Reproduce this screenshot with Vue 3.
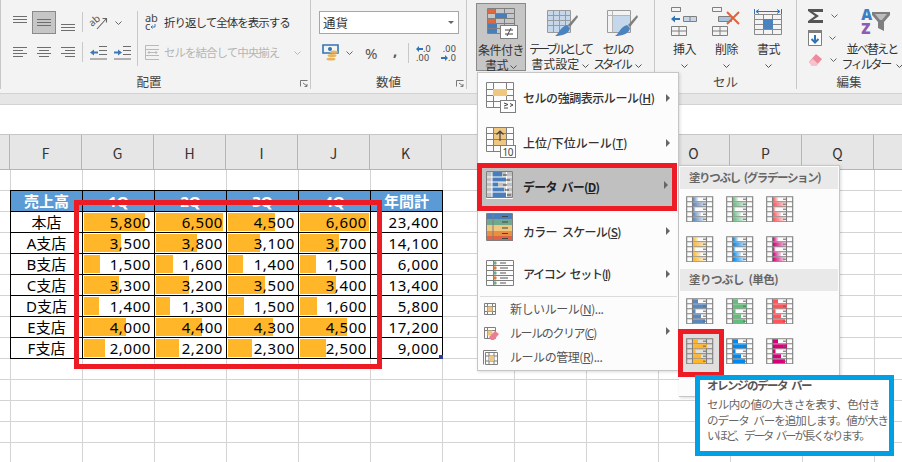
<script setup>
const cols = ['G', 'H', 'I', 'J', 'K']
const heads = ['1Q', '2Q', '3Q', '4Q']
const rows = [
  { name: '本店', v: [['5,800', 61], ['6,500', 67], ['4,500', 47], ['6,600', 69]], t: '23,400' },
  { name: 'A支店', v: [['3,500', 37], ['3,800', 41], ['3,100', 32], ['3,700', 39]], t: '14,100' },
  { name: 'B支店', v: [['1,500', 16], ['1,600', 17], ['1,400', 15], ['1,500', 16]], t: '6,000' },
  { name: 'C支店', v: [['3,300', 35], ['3,200', 33], ['3,500', 37], ['3,400', 36]], t: '13,400' },
  { name: 'D支店', v: [['1,400', 15], ['1,300', 14], ['1,500', 16], ['1,600', 17]], t: '5,800' },
  { name: 'E支店', v: [['4,000', 42], ['4,400', 46], ['4,300', 45], ['4,500', 47]], t: '17,200' },
  { name: 'F支店', v: [['2,000', 21], ['2,200', 23], ['2,300', 24], ['2,500', 26]], t: '9,000' }
]
const barLens = [5, 14, 2.5, 8, 12]
const gradColors = [['g1', '#5b87bd'], ['g2', '#63be7b'], ['g3', '#ff555a'], ['g4', '#ffb628'], ['g5', '#008aef'], ['g6', '#d6007b']]
const solidColors = ['#5b87bd', '#63be7b', '#ff555a', '#ffb628', '#008aef', '#d6007b']
const gridPath = 'M.7.7h26v25h-26zM.7 5.7h26M.7 10.7h26M.7 15.7h26M.7 20.7h26M6.5.7v25M20.5.7v25'
const dashPath = 'M17 3.2h3M17 8.2h3M17 13.2h3M17 18.2h3M17 23.2h3'
</script>

<template>
  <div class="app">
    <svg width="0" height="0" class="defs">
      <defs>
        <linearGradient v-for="g in gradColors" :key="g[0]" :id="g[0]">
          <stop offset="0" :stop-color="g[1]" />
          <stop offset="1" :stop-color="g[1]" stop-opacity=".15" />
        </linearGradient>
      </defs>
    </svg>

    <header class="ribbon">
      <section class="group g-align">
        <div class="tools">
          <div class="grid3">
            <span class="tb"><svg width="14" height="16" stroke="#6e6e6e" fill="none"><path d="M0 1.5h14M0 4.5h14M0 7.5h14" /></svg></span>
            <span class="tb on"><svg width="14" height="16" stroke="#6e6e6e" fill="none"><path d="M0 4.5h14M0 7.5h14M0 10.5h14" /></svg></span>
            <span class="tb"><svg width="14" height="16" stroke="#6e6e6e" fill="none"><path d="M0 9.5h14M0 12.5h14M0 15.5h14" /></svg></span>
            <span class="tb"><svg width="14" height="16" stroke="#6e6e6e" fill="none"><path d="M0 2.5h14M0 5.5h10M0 8.5h14M0 11.5h10" /></svg></span>
            <span class="tb"><svg width="14" height="16" stroke="#6e6e6e" fill="none"><path d="M0 2.5h14M2 5.5h10M0 8.5h14M2 11.5h10" /></svg></span>
            <span class="tb"><svg width="14" height="16" stroke="#6e6e6e" fill="none"><path d="M0 2.5h14M4 5.5h10M0 8.5h14M4 11.5h10" /></svg></span>
          </div>
          <div class="vsep-col"><i></i><i></i></div>
          <div class="orient">
            <div class="o-row">
              <span class="tb wide"><svg class="ori" width="18" height="15" fill="none" stroke="#666"><text x="0" y="0" transform="translate(2 12) rotate(-40)" class="orient-t">ab</text><path d="M7 14l9-10M12.500 3.500H16.500V7.500" stroke-width="1.100" /></svg><svg class="chev" width="7" height="4" viewBox="0 0 7 4" fill="none" stroke="#666"><path d="M.5.5l3 3 3-3" /></svg></span>
            </div>
            <div class="o-row">
              <span class="tb"><svg width="17" height="14" fill="none"><path d="M9 .5h8M9 4.5h8M9 8.5h8M0 13h17" stroke="#6e6e6e" /><path d="M0 6.5l4-3v2h4v2H4v2z" fill="#3f78b5" /></svg></span>
              <span class="tb"><svg width="17" height="14" fill="none"><path d="M9 .5h8M9 4.5h8M9 8.5h8M0 13h17" stroke="#6e6e6e" /><path d="M8 6.5l-4-3v2H0v2h4v2z" fill="#3f78b5" /></svg></span>
            </div>
          </div>
          <div class="sep tall"></div>
          <div class="wrapcol">
            <div class="wrapline"><svg width="14" height="16" fill="none"><path d="M10 9v3H6M7.500 10.500L6 12l1.500 1.500" stroke="#3f78b5" /></svg><span class="abc">ab<br />c</span><span class="rt">折り返して全体を表示する</span></div>
            <div class="wrapline dim"><svg class="merge" width="15" height="15" fill="none" stroke="#b9b9b9"><path d="M.5.500h14v14H.5zM.5 4.500h14M.5 10.500h14M3 7.500h9M4.500 6L3 7.500 4.500 9M10.500 6L12 7.500 10.500 9" /></svg><span class="rt">セルを結合して中央揃え</span><svg class="chev far" width="7" height="4" viewBox="0 0 7 4" fill="none" stroke="#b9b9b9"><path d="M.5.5l3 3 3-3" /></svg></div>
          </div>
        </div>
        <footer class="glabel"><span>配置</span><svg class="launch" width="8" height="7" fill="none" stroke="#777"><path d="M.5 6.500V.5h7M3 3l4 3M7 4v2.500H4.500" /></svg></footer>
      </section>

      <section class="group g-num">
        <div class="numtools">
          <div class="combo"><span>通貨</span><i></i></div>
          <div class="numrow">
            <svg width="17" height="17" fill="none"><path d="M1 1h15v8H1z" stroke="#2f75b5" stroke-width="1.600" /><circle cx="8" cy="5" r="2" fill="#2f75b5" /><ellipse cx="12" cy="8" rx="4" ry="1.600" fill="#e8b35f" /><ellipse cx="10" cy="11.500" rx="4.500" ry="1.600" fill="#e8b35f" /><ellipse cx="9" cy="15" rx="4.500" ry="1.600" fill="#e8b35f" /></svg>
            <svg class="chev nc" width="7" height="4" viewBox="0 0 7 4" fill="none" stroke="#666"><path d="M.5.5l3 3 3-3" /></svg>
            <span class="pct">%</span>
            <span class="cma">,</span>
            <i class="minisep"></i>
            <span class="dec"><b class="d-top"><svg width="7" height="6"><path d="M0 3l3-3v2h4v2H3v2z" fill="#2f75b5" /></svg>.0</b><b>.00</b></span>
            <span class="dec r"><b>.00</b><b class="d-top"><svg width="7" height="6"><path d="M7 3L4 0v2H0v2h4v2z" fill="#2f75b5" /></svg>.0</b></span>
          </div>
        </div>
        <footer class="glabel"><span>数値</span><svg class="launch" width="8" height="7" fill="none" stroke="#777"><path d="M.5 6.500V.5h7M3 3l4 3M7 4v2.500H4.500" /></svg></footer>
      </section>

      <section class="group g-style">
        <div class="bigs">
          <div class="big b-cond active">
            <svg class="ic" width="31" height="31" fill="none">
              <path d="M.5.5h27v25H.5zM.5 5.500h27M.5 10.500h27M.5 15.500h27M.5 20.500h27M8.500.5v25M17.500.5v25M26 .5" stroke="#7f7f7f" />
              <path d="M1 1h7v4H1zM1 11h7v4H1z" fill="#dd6b3f" /><path d="M8 6h12v4H8zM1 16h9v4H1zM1 21h9v4H1z" fill="#4a7ebb" />
              <rect x="13.500" y="17.500" width="17" height="13" fill="#fff" stroke="#7f7f7f" /><path d="M18 22h8M18 26h8M24 20l-4 8" stroke="#444" />
            </svg>
            <span>条件付き</span><span>書式 <svg class="chev" width="7" height="4" viewBox="0 0 7 4" fill="none" stroke="#555"><path d="M.5.5l3 3 3-3" /></svg></span>
          </div>
          <div class="big b-table">
            <svg class="ic" width="31" height="29" fill="none">
              <path d="M1 1h22v21H1z" fill="#c5d7ea" /><path d="M.5.500h23v22H.5zM.5 5.500h23M.5 10.500h23M.5 15.500h23M6.500.5v22M12.500.5v22M18.500.5v22" stroke="#9a9a9a" />
              <path d="M30 5l-9 10 2 2 8-10z" fill="#7f7f7f" /><path d="M20 15l3 3c-1 6-8 8-15 8 4-2 5-9 12-11z" fill="#4a83bd" />
            </svg>
            <span class="k3">テーブルとして</span><span class="k0">書式設定 <svg class="chev" width="7" height="4" viewBox="0 0 7 4" fill="none" stroke="#555"><path d="M.5.5l3 3 3-3" /></svg></span>
          </div>
          <div class="big b-cell">
            <svg class="ic" width="31" height="29" fill="none">
              <path d="M.5.500h23v22H.5z" stroke="#9a9a9a" /><path d="M.5 5.500h23M5.500.5v22" stroke="#b5b5b5" /><path d="M6 6h17v16H6z" fill="#c5d7ea" />
              <path d="M30 5l-9 10 2 2 8-10z" fill="#7f7f7f" /><path d="M20 15l3 3c-1 6-8 8-15 8 4-2 5-9 12-11z" fill="#4a83bd" />
            </svg>
            <span class="k2">セルの</span><span class="k28">スタイル <svg class="chev" width="7" height="4" viewBox="0 0 7 4" fill="none" stroke="#555"><path d="M.5.5l3 3 3-3" /></svg></span>
          </div>
        </div>
        <footer class="glabel"></footer>
      </section>

      <section class="group g-cell">
        <div class="bigs">
          <div class="big b-c">
            <svg class="ic" width="29" height="29" fill="none"><path d="M1.500.500h9v4h-9zM10.500.5v4M1.500 19.500h15v9h-15zM1.500 24h15M9 19.500v9" stroke="#7f7f7f" /><path d="M13.500 9.500h13v5h-13z" fill="#c5d7ea" stroke="#7f7f7f" /><path d="M20 9.500v5" stroke="#7f7f7f" /><path d="M1 12l4-3.500v2.500h5v2H5v2.500z" fill="#2f75b5" /></svg>
            <span>挿入</span><svg class="chev low" width="7" height="4" viewBox="0 0 7 4" fill="none" stroke="#555"><path d="M.5.5l3 3 3-3" /></svg>
          </div>
          <div class="big b-c">
            <svg class="ic" width="31" height="29" fill="none"><path d="M1.500.500h9v4h-9zM10.500.5v4M1.500 19.500h15v9h-15zM1.500 24h15M9 19.500v9" stroke="#7f7f7f" /><path d="M7.500 9.500h13v5h-13z" fill="#a9c4de" stroke="#7f7f7f" /><path d="M16 5l12 12M28 5L16 17" stroke="#e0633a" stroke-width="2" /></svg>
            <span>削除</span><svg class="chev low" width="7" height="4" viewBox="0 0 7 4" fill="none" stroke="#555"><path d="M.5.5l3 3 3-3" /></svg>
          </div>
          <div class="big b-c">
            <svg class="ic" width="29" height="31" fill="none"><path d="M.5 5v5M27.500 5v5M2 7.500h24M2 7.500l3-2M2 7.500l3 2M26 7.500l-3-2M26 7.500l-3 2" stroke="#2f75b5" transform="translate(0 -3)" /><path d="M.5 7.500h27v20H.5zM.5 12.500h27M.5 17.500h27M.5 22.500h27M9.500 7.500v20M18.500 7.500v20" stroke="#8a8a8a" /><path d="M9 12h10v10H9z" fill="#4a83bd" /></svg>
            <span>書式</span><svg class="chev low" width="7" height="4" viewBox="0 0 7 4" fill="none" stroke="#555"><path d="M.5.5l3 3 3-3" /></svg>
          </div>
        </div>
        <footer class="glabel center">セル</footer>
      </section>

      <section class="group g-edit">
        <div class="edit-tools">
          <div class="edit-col">
            <div class="e"><svg width="16" height="14"><path d="M0 0h15v3H5l6 4-6 4h10v3H0v-2l7-5-7-5z" fill="#555" /></svg><svg class="chev" width="7" height="4" viewBox="0 0 7 4" fill="none" stroke="#666"><path d="M.5.5l3 3 3-3" /></svg></div>
            <div class="e"><svg width="14" height="16" fill="none"><path d="M.500.500h13v15H.500z" stroke="#7f7f7f" fill="#fff" /><path d="M0 0h14v3H0z" fill="#7f7f7f" /><path d="M7 5v7M3.500 9L7 12.500 10.500 9" stroke="#2f75b5" stroke-width="2" /></svg><svg class="chev" width="7" height="4" viewBox="0 0 7 4" fill="none" stroke="#666"><path d="M.5.5l3 3 3-3" /></svg></div>
            <div class="e"><svg width="15" height="14"><path d="M1 9l7-8 6 5-6 7H4z" fill="#ee8b9b" /><path d="M1 9l3 4h4l2-2-5-5z" fill="#f8c2cc" /></svg><svg class="chev" width="7" height="4" viewBox="0 0 7 4" fill="none" stroke="#666"><path d="M.5.5l3 3 3-3" /></svg></div>
          </div>
          <div class="big b-sort">
            <div class="sorticon"><span class="az"><b class="a">A</b><b class="z">Z</b></span><svg width="18" height="22"><path d="M0 1h18v3l-6 7v9l-6-3v-6L0 4z" fill="#7f7f7f" /><path d="M3 3h12l-5 6H8z" fill="#bdbdbd" /></svg></div>
            <span class="k18">並べ替えと</span><span class="k2">フィルター <svg class="chev" width="7" height="4" viewBox="0 0 7 4" fill="none" stroke="#555"><path d="M.5.5l3 3 3-3" /></svg></span>
          </div>
        </div>
        <footer class="glabel center">編集</footer>
      </section>
    </header>

    <div class="band"></div>
    <div class="formula"></div>

    <div class="colhead">
      <span class="stub"></span>
      <span class="ch">F</span>
      <span v-for="c in cols" :key="c" class="ch">{{ c }}</span>
      <span class="ch"></span><span class="ch"></span><span class="ch"></span>
      <span class="ch">O</span><span class="ch">P</span><span class="ch">Q</span>
    </div>

    <main class="sheet">
      <div class="table">
        <div class="c hd">売上高</div>
        <div v-for="h in heads" :key="h" class="c hd">{{ h }}</div>
        <div class="c hd">年間計</div>
        <template v-for="r in rows" :key="r.name">
          <div class="c name">{{ r.name }}</div>
          <div v-for="(x, i) in r.v" :key="i" class="c num">
            <i class="bar" :style="{ width: x[1] + 'px' }"></i><span>{{ x[0] }}</span>
          </div>
          <div class="c num"><span>{{ r.t }}</span></div>
        </template>
        <i class="handle"></i>
      </div>
    </main>

    <div class="redbox"></div>

    <nav class="menu">
      <div class="mi h52">
        <svg class="mic" width="32" height="32" fill="none"><path d="M.5.500h27v25H.5zM.5 7.500h27M.5 13.500h27M.5 19.500h27M7.500.5v25M20.500.5v25" stroke="#7f7f7f" /><path d="M7 7h14v7H7z" fill="#efc77f" /><rect x="14.500" y="18.500" width="15" height="12" fill="#fff" stroke="#7f7f7f" /><path d="M18 21l4 1.500-4 1.500M18 26h4M24 21.500l3 1.500-3 1.500" stroke="#444" /></svg>
        <span class="mt">セルの強調表示ルール(<u>H</u>)</span><i class="tri"></i>
      </div>
      <div class="mi h39">
        <svg class="mic" width="32" height="32" fill="none"><path d="M7 0h14v19H7z" fill="#efc77f" /><path d="M.5.500h27v24H.5zM.5 6.500h27M.5 12.500h27M.5 18.500h27M7.500.5v24M20.500.5v24" stroke="#7f7f7f" /><path d="M14 14V4M10.500 7.500L14 4l3.500 3.500" stroke="#444" stroke-width="1.200" /><rect x="14.500" y="18.500" width="15" height="12" fill="#fff" stroke="#7f7f7f" /><text x="16.500" y="29" class="ten">10</text></svg>
        <span class="mt m-rank">上位/下位ルール(<u>T</u>)</span><i class="tri"></i>
      </div>
      <div class="mi sel">
        <svg class="mic" width="28" height="30" fill="none"><path d="M6 1h10v5H6zM6 11h6v5H6zM6 16h12v5H6zM6 6h14v5H6zM6 21h14v5H6z" fill="#4a7ebb" /><path d="M.5.500h26v27H.5zM.5 6h26M.5 11h26M.5 16h26M.5 21h26M6 .5v27M20.500.5v27" stroke="#fff" /><path d="M.5.500h26v26H.5z" stroke="#7f7f7f" /><path d="M17 4h4M20 9h4M17 14h4M19 19h4M21 24h4" stroke="#444" /></svg>
        <span class="mt strong m-bar">データ バー(<u>D</u>)</span><i class="tri"></i>
      </div>
      <div class="mi h46">
        <svg class="mic" width="28" height="30" fill="none"><path d="M1 1h26v5H1z" fill="#4a7ebb" /><path d="M1 6h26v6H1z" fill="#6fa88e" /><path d="M1 12h26v6H1z" fill="#efc77f" /><path d="M1 18h26v5H1z" fill="#e88f42" /><path d="M1 23h26v5H1z" fill="#df6345" /><path d="M.5.500h26v27H.5zM7 .5v27" stroke="#7f7f7f" /><path d="M16 3.500h6M16 9h6M16 15h6M16 20.500h6M16 25.500h6" stroke="#444" /></svg>
        <span class="mt m-color">カラー スケール(<u>S</u>)</span><i class="tri"></i>
      </div>
      <div class="mi h40">
        <svg class="mic" width="28" height="27" fill="none"><path d="M.5.500h27v25H.5zM.5 5.500h27M.5 10.500h27M.5 15.500h27M.5 20.500h27M7.500.5v25" stroke="#7f7f7f" /><circle cx="9" cy="3" r="1.700" fill="#6fa88e" /><circle cx="9" cy="8" r="1.700" fill="#e8772e" /><circle cx="9" cy="13" r="1.700" fill="#6fa88e" /><circle cx="9" cy="18" r="1.700" fill="#e8772e" /><circle cx="9" cy="23" r="1.700" fill="#6fa88e" /><path d="M14 3h6M14 8h8M14 13h6M14 18h8M14 23h6" stroke="#555" /></svg>
        <span class="mt m-icon">アイコン セット(<u>I</u>)</span><i class="tri"></i>
      </div>
      <div class="mdiv"></div>
      <div class="ms"><svg class="sic" width="14" height="14" fill="none"><path d="M1.500 1.500h11v11h-11zM1.500 4.500h11M1.500 9.500h11M4.500 1.500v11M9.500 1.500v11" stroke="#7f7f7f" /><path d="M4.500 4.500h5v5h-5z" fill="#efc77f" /></svg><span>新しいルール(<u>N</u>)...</span></div>
      <div class="ms"><svg class="sic" width="16" height="14" fill="none"><path d="M1.500 1.500h11v11h-11zM4.500 1.500v11M1.500 4.500h11" stroke="#7f7f7f" /><path d="M4.500 4.500h5v5h-5z" fill="#efc77f" /><path d="M6 11l6-6 4 3-5 6H8z" fill="#ea7f93" /></svg><span class="m-clear">ルールのクリア(<u>C</u>)</span><i class="tri"></i></div>
      <div class="ms"><svg class="sic" width="15" height="15" fill="none"><path d="M.5.500v14M.5.500h13M2.500 2.500h12v12h-12zM2.500 6h12M2.500 11h12M6 2.500v12M11 2.500v12" stroke="#7f7f7f" /><path d="M6 6h5v5H6z" fill="#efc77f" /></svg><span>ルールの管理(<u>R</u>)...</span></div>
    </nav>

    <aside class="sub">
      <div class="st st-g">塗りつぶし (グラデーション)</div>
      <div class="igrid">
        <svg v-for="g in gradColors" :key="g[0]" width="28" height="26" viewBox="0 0 28 26" fill="none">
          <path :d="gridPath" stroke="#7f7f7f" stroke-width="1.100" />
          <rect v-for="(l, k) in barLens" :key="k" x="7" :y="1.300 + k * 5" :width="l" height="4" :fill="'url(#' + g[0] + ')'" />
          <path :d="dashPath" stroke="#666" />
        </svg>
      </div>
      <div class="st">塗りつぶし (単色)</div>
      <div class="igrid">
        <span v-for="(c, i) in solidColors" :key="c" class="icell" :class="{ pick: i === 3 }">
          <svg width="28" height="26" viewBox="0 0 28 26" fill="none">
            <path :d="gridPath" stroke="#7f7f7f" stroke-width="1.100" />
            <rect v-for="(l, k) in barLens" :key="k" x="7" :y="1.300 + k * 5" :width="l" height="4" :fill="c" />
            <path :d="dashPath" stroke="#666" />
          </svg>
        </span>
      </div>
    </aside>

    <div class="tip">
      <div class="tt">オレンジのデータ バー</div>
      <p><span class="l1">セル内の値の大きさを表す、色付き</span><span class="l2">のデータ バーを追加します。値が大き</span><span class="l3">いほど、データ バーが長くなります。</span></p>
    </div>
  </div>
</template>

<style>
html, body { margin: 0; padding: 0; background: #fff; }
</style>

<style scoped>
.app {
  position: relative;
  width: 902px;
  height: 462px;
  overflow: hidden;
  background: #fff;
  font-family: "Noto Sans CJK JP", "Noto Sans", sans-serif;
  font-size: 12px;
  color: #444;
  display: flex;
  flex-direction: column;
}
.defs { position: absolute; }
i { display: block; font-style: normal; }

/* Ribbon */
.ribbon {
  flex: none;
  height: 93px;
  display: flex;
  background: #f3f3f3;
  border-bottom: 1px solid #d2d2d2;
  box-sizing: content-box;
  padding-left: 1px;
  line-height: 15px;
}
.group {
  flex: none;
  display: flex;
  flex-direction: column;
  box-sizing: border-box;
  height: 89px;
  border-right: 1px solid #c8c8c8;
  position: relative;
}
.g-align { width: 311px; border-left: 1px solid #c8c8c8; margin-left: -1px; }
.g-num { width: 156px; }
.g-style { width: 188px; }
.g-cell { width: 142px; }
.g-edit { width: 104px; border-right: 0; }
.tools { display: flex; height: 74px; padding: 11px 0 0 7px; box-sizing: border-box; }
.grid3 { display: grid; grid-template-columns: repeat(3, 24px); grid-auto-rows: 23px; row-gap: 7px; }
.tb { display: flex; align-items: center; justify-content: center; width: 24px; height: 23px; box-sizing: border-box; }
.tb.on { background: #c6c6c6; border: 1px solid #8a8a8a; }
.tb.wide { width: 48px; justify-content: flex-start; padding-left: 4px; gap: 7px; }
.ori { overflow: visible; }
.orient-t { font: 10px "Noto Sans", sans-serif; fill: #555; stroke: none; }
.vsep-col { width: 4px; margin-left: 2px; display: flex; flex-direction: column; gap: 10px; padding-top: 1px; }
.vsep-col i { width: 1px; height: 20px; background: #c8c8c8; }
.orient { width: 48px; display: flex; flex-direction: column; gap: 7px; }
.o-row { display: flex; height: 23px; }
.sep.tall { width: 1px; height: 55px; background: #c8c8c8; margin: 0 7px 0 3px; }
.wrapcol { display: flex; flex-direction: column; gap: 7px; }
.wrapline { display: flex; align-items: center; height: 23px; position: relative; width: 160px; }
.wrapline svg:first-child { width: 14px; position: absolute; left: 0; }
.abc { width: 19px; font: 11px/8px "Noto Sans", sans-serif; color: #444; position: relative; letter-spacing: -.2px; top: -1px; }
.rt { letter-spacing: -1px; font-size: 11.500px; color: #333; white-space: nowrap; }
.wrapline.dim { color: #b5b5b5; }
.wrapline.dim .rt { color: #b5b5b5; margin-left: 19px; }
.wrapline .far { position: absolute; left: 149px; top: 10px; }
.glabel { flex: 1; display: flex; justify-content: center; align-items: center; font-size: 12.500px; color: #444; position: relative; padding-top: 3px; }
.launch { position: absolute; right: 2px; top: 9px; }
.g-align .glabel { padding-right: 13px; }
.numtools { height: 74px; box-sizing: border-box; padding: 11px 0 0 8px; }
.combo { width: 140px; height: 23px; box-sizing: border-box; background: #fff; border: 1px solid #a6a6a6; display: flex; align-items: center; justify-content: space-between; padding: 0 4px 0 3px; font-size: 12.500px; color: #333; }
.combo i { border: 3px solid transparent; border-top: 3px solid #666; border-bottom: 0; width: 0; }
.numrow { display: flex; align-items: center; height: 23px; margin-top: 7px; padding-left: 3px; }
.nc { margin-left: 7px; }
.pct { margin-left: 12px; font: 15px "Noto Sans", sans-serif; color: #555; width: 13px; }
.cma { margin-left: 15px; font: bold 15px/10px "Noto Sans", sans-serif; color: #555; width: 6px; position: relative; top: -3px; }
.minisep { width: 1px; height: 20px; background: #c8c8c8; margin-left: 9px; margin-right: 7px; }
.dec { width: 24px; font: 9px/9px "Noto Sans", sans-serif; color: #444; display: flex; flex-direction: column; align-items: flex-start; letter-spacing: .2px; }
.dec b { font-weight: 400; white-space: nowrap; }
.dec.r { align-items: flex-end; width: 16px; }
.bigs { display: flex; height: 74px; }
.big { display: flex; flex-direction: column; align-items: center; box-sizing: border-box; color: #333; line-height: 15px; white-space: nowrap; letter-spacing: -.5px; font-size: 12px; flex: none; }
.big .ic { flex: none; }
.big > span { height: 15px; display: block; }
.k3 { letter-spacing: -3px; }
.k0 { letter-spacing: 0; }
.k2 { letter-spacing: -2.2px; }
.k28 { letter-spacing: -2.800px; }
.k18 { letter-spacing: -1.800px; }
.k2 .chev, .k28 .chev { margin-left: 5px; }
.b-cond { width: 50px; height: 68px; margin: 3px 2px 0 9px; padding-top: 4px; border: 1px solid #8a8a8a; background: #c6c6c6; }
.b-cond .ic { margin-bottom: 3px; margin-left: 3px; }
.b-table { width: 64px; padding-top: 10px; margin-right: 5px; }
.b-table .ic { margin-bottom: 2px; margin-left: 4px; }
.b-cell { width: 41px; padding-top: 10px; }
.b-cell .ic { margin-bottom: 2px; margin-left: 10px; }
.g-cell .bigs { padding-left: 15px; gap: 13px; }
.b-c { width: 29px; padding-top: 7px; }
.b-c .ic { height: 31px; margin-bottom: 3px; }
.low { margin-top: 8px; }
.edit-tools { display: flex; height: 74px; }
.edit-col { width: 44px; padding: 8px 0 0 11px; box-sizing: border-box; display: flex; flex-direction: column; gap: 7px; flex: none; }
.e { display: flex; align-items: center; gap: 7px; height: 15px; }
.b-sort { width: 58px; padding-top: 7px; margin-left: 2px; }
.sorticon { display: flex; height: 31px; align-items: flex-start; margin-bottom: 3px; margin-left: 7px; }
.sorticon svg { margin-top: 4px; }
.az { display: flex; flex-direction: column; font: bold 15px/14px "Noto Sans", sans-serif; }
.a { color: #3b7fc4; }
.z { color: #8e5bb5; }
.chev { display: inline-block; vertical-align: middle; }

.band { flex: none; height: 10px; background: #e6e6e6; border-bottom: 1px solid #d4d4d4; }
.formula { flex: none; height: 29px; background: #fff; border-bottom: 1px solid #c6c6c6; }

.colhead {
  flex: none;
  height: 34px;
  background: #e6e6e6;
  border-bottom: 1px solid #b5b5b5;
  box-sizing: content-box;
  display: flex;
}
.stub { width: 10px; flex: none; border-right: 1px solid #b5b5b5; box-sizing: border-box; }
.ch { width: 72px; flex: none; box-sizing: border-box; border-right: 1px solid #b5b5b5; display: flex; align-items: center; justify-content: center; font-size: 14px; color: #333; padding-top: 2px; }

/* Sheet */
.sheet {
  flex: 1;
  padding: 20px 0 0 10px;
  background-color: #fff;
  background-image:
    linear-gradient(to right, #d4d4d4 1px, transparent 1px),
    linear-gradient(to bottom, #d4d4d4 1px, transparent 1px);
  background-size: 72px 21px, 72px 21px;
  background-position: 10px 0, 0 20px;
}
.table {
  position: relative;
  display: grid;
  grid-template-columns: repeat(6, 72px);
  grid-auto-rows: 21px;
  width: 433px;
  box-sizing: border-box;
  border-left: 1px solid #000;
  border-top: 1px solid #000;
  background: #fff;
}
.c {
  position: relative;
  box-sizing: border-box;
  border-right: 1px solid #000;
  border-bottom: 1px solid #000;
  font: 15px/20px "Noto Sans", "Noto Sans CJK JP", sans-serif;
  color: #000;
  white-space: nowrap;
}
.hd { background: #5b9bd5; color: #fff; font-weight: 700; text-align: center; }
.name { text-align: center; }
.num { text-align: right; padding-right: 3px; letter-spacing: .6px; }
.num span { position: relative; }
.bar { position: absolute; left: 1px; top: 1px; bottom: 1px; background: #ffb628; }
.handle { position: absolute; right: 0; bottom: 0; width: 4px; height: 4px; background: #2f3f8f; }

.redbox {
  position: absolute;
  left: 74px;
  top: 200px;
  width: 308px;
  height: 169px;
  box-sizing: border-box;
  border: 5px solid #ed1c24;
}

/* Menu */
.menu {
  position: absolute;
  left: 477px;
  top: 72px;
  width: 202px;
  height: 299px;
  box-sizing: border-box;
  background: #fcfcfc;
  border: 1px solid #c6c6c6;
  box-shadow: 1px 1px 3px rgba(0, 0, 0, .15);
  color: #444;
  letter-spacing: -.45px;
}
.mi { display: flex; align-items: center; position: relative; padding-left: 8px; box-sizing: border-box; }
.h52 { height: 53px; padding-bottom: 4px; }
.h39 { height: 37px; padding-bottom: 4px; }
.h46 { height: 44px; padding-bottom: 4px; }
.h46 .mic { margin-top: -6px; }
.h40 { height: 41px; padding-bottom: 4px; }
.mic { flex: none; width: 32px; }
.mt { margin-left: 5px; font-size: 12px; color: #333; white-space: nowrap; font-weight: 500; }
.m-rank { letter-spacing: 0; }
.m-bar { word-spacing: 3px; letter-spacing: -.8px; }
.m-color { word-spacing: 3px; letter-spacing: -.7px; }
.m-icon { word-spacing: 3px; letter-spacing: -1.300px; }
.m-clear { letter-spacing: -1.400px; }
.strong { font-weight: 700; color: #222; }
.tri { position: absolute; right: 8px; top: 50%; margin-top: -6px; width: 0; height: 0; border-left: 4px solid #666; border-top: 4px solid transparent; border-bottom: 4px solid transparent; }
.sel {
  height: 48px;
  margin-left: -1px;
  width: 200px;
  background: #c0c0c0;
  border: 5px solid #ed1c24;
  padding-left: 4px;
  padding-bottom: 2px;
}
.sel .tri { right: 4px; }
.mdiv { height: 1px; background: #dcdcdc; margin: 0 1px 0 2px; }
.ms { display: flex; align-items: center; height: 24px; position: relative; padding-left: 4px; color: #555; font-size: 12px; }
.ms span { position: absolute; left: 32px; margin-top: -2px; }
.sic { flex: none; margin-left: 1px; }

/* Submenu */
.sub {
  position: absolute;
  left: 679px;
  top: 165px;
  width: 161px;
  height: 232px;
  box-sizing: border-box;
  background: #fcfcfc;
  border: 1px solid #c6c6c6;
  border-left: 0;
  box-shadow: 1px 1px 3px rgba(0, 0, 0, .15);
  padding: 1px 1px 0;
}
.st { height: 22px; background: #e9e9e9; padding-left: 9px; line-height: 20px; font-size: 11.500px; font-weight: 700; color: #666; letter-spacing: -.6px; word-spacing: 3px; white-space: nowrap; overflow: hidden; }
.st-g { letter-spacing: -1.400px; }
.igrid { display: grid; grid-template-columns: repeat(3, 40px); grid-auto-rows: 40px; padding: 7px 0 0 6px; height: 80px; box-sizing: border-box; }
.igrid > svg { display: block; }
.icell { display: block; position: relative; width: 28px; height: 26px; }
.icell.pick::before {
  content: "";
  position: absolute;
  left: -8px;
  top: -9px;
  width: 46px;
  height: 48px;
  box-sizing: border-box;
  background: #e0dfdd;
  border: 5px solid #ed1c24;
}
.icell svg { position: relative; display: block; }

/* Tooltip */
.tip {
  position: absolute;
  left: 695px;
  top: 375px;
  width: 199px;
  height: 81px;
  box-sizing: border-box;
  background: #fff;
  border: 5px solid #00a0e4;
  padding: 0 7px;
  color: #666;
  line-height: 15.500px;
  white-space: nowrap;
  word-spacing: 3px;
}
.tt { font-weight: 700; color: #555; font-size: 11.500px; line-height: 14px; margin-top: -2px; letter-spacing: -1.500px; }
.tip p { margin: 5px 0 0; font-size: 11.500px; }
.tip p span { display: block; }
.l1 { letter-spacing: -.65px; }
.l2 { letter-spacing: -1.050px; }
.l3 { letter-spacing: -2.100px; }
.ten { font: 10px "Noto Sans", sans-serif; fill: #444; stroke: none; }
</style>
